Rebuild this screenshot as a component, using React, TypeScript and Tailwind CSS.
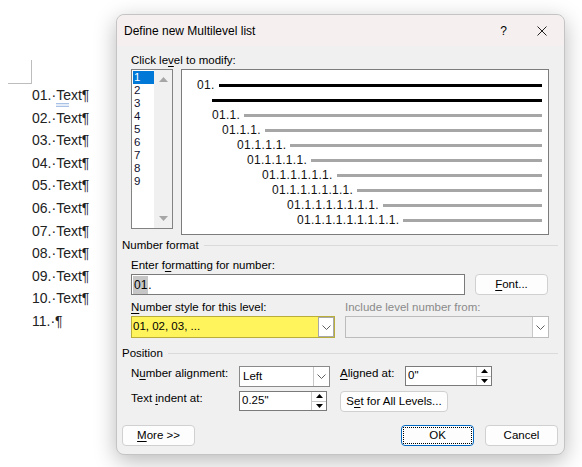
import React from 'react';

/**
 * Word "Define new Multilevel list" dialog over a numbered document list
 */

const ui = "font-['Liberation_Sans',Arial,sans-serif]";

const docItems = ['01.', '02.', '03.', '04.', '05.', '06.', '07.', '08.', '09.', '10.'];

const previewRows = [
  { pad: 'pl-[15px]', label: '01.', dark: true },
  { pad: 'pl-[30px]', label: '', dark: true },
  { pad: 'pl-[30px]', label: '01.1.' },
  { pad: 'pl-[40px]', label: '01.1.1.' },
  { pad: 'pl-[55px]', label: '01.1.1.1.' },
  { pad: 'pl-[65px]', label: '01.1.1.1.1.' },
  { pad: 'pl-[80px]', label: '01.1.1.1.1.1.' },
  { pad: 'pl-[90px]', label: '01.1.1.1.1.1.1.' },
  { pad: 'pl-[105px]', label: '01.1.1.1.1.1.1.1.' },
  { pad: 'pl-[115px]', label: '01.1.1.1.1.1.1.1.1.' },
];

function Chevron() {
  return (
    <svg width="9" height="5" viewBox="0 0 9 5" fill="none">
      <polyline points="0.5,0.5 4.5,4.5 8.5,0.5" stroke="#606060" strokeWidth="1" />
    </svg>
  );
}

function Triangle({ up, color = '#000', w = 7, h = 4 }: { up?: boolean; color?: string; w?: number; h?: number }) {
  return (
    <svg width={w} height={h} viewBox={`0 0 ${w} ${h}`}>
      <polygon points={up ? `0,${h} ${w / 2},0 ${w},${h}` : `0,0 ${w},0 ${w / 2},${h}`} fill={color} />
    </svg>
  );
}

function Key({ children }: { children: React.ReactNode }) {
  return <span className="underline underline-offset-2">{children}</span>;
}

function Button({ children, className = '' }: { children: React.ReactNode; className?: string }) {
  return (
    <div
      className={`flex h-[21px] items-center justify-center rounded-[4px] border border-[#d0d0d0] bg-[#fdfdfd] text-[11.5px] text-black ${className}`}
    >
      {children}
    </div>
  );
}

function Spinner({ value, className = '' }: { value: string; className?: string }) {
  return (
    <div className={`flex h-[20px] border border-[#7a7a7a] bg-white ${className}`}>
      <div className="flex flex-1 items-center pl-[2px] text-[11.5px]">{value}</div>
      <div className="flex w-[15px] flex-col border-l border-[#c8c8c8]">
        <div className="flex flex-1 items-center justify-center border-b border-[#c8c8c8]">
          <Triangle up />
        </div>
        <div className="flex flex-1 items-center justify-center">
          <Triangle />
        </div>
      </div>
    </div>
  );
}

function SectionHeader({ title }: { title: string }) {
  return (
    <div className="flex h-[14px] items-center gap-[5px] text-[11.5px] leading-[14px]">
      <span>{title}</span>
      <div className="h-px flex-1 bg-[#dadada]" />
    </div>
  );
}

export default function App() {
  return (
    <div className="relative h-[467px] w-[582px] overflow-hidden bg-white">
      {/* document behind the dialog */}
      <div className="pl-[8px] pt-[60px]">
        <div className="h-[24px] w-[24px] border-b border-r border-[#bdbdbd]" />
        <ul className="ml-[24px] font-['Liberation_Sans',Arial,sans-serif] text-[14px] leading-[22.6px] text-[#222]">
          {docItems.map((n, i) => (
            <li key={n}>
              {n}·
              <span className="relative">
                Text
                {i === 0 && (
                  <span className="absolute left-0 top-[16px] h-[4px] w-[13px] border-y border-[#a8c1e6] bg-[#e4ecf8]" />
                )}
              </span>
              ¶
            </li>
          ))}
          <li>11.·¶</li>
        </ul>
      </div>

      {/* dialog */}
      <div
        className={`absolute left-[116px] top-[14px] flex h-[441px] w-[449px] flex-col rounded-[8px] border border-[#c4c4c4] bg-[#f0f0f0] text-black shadow-[0_6px_22px_rgba(0,0,0,0.28)] ${ui}`}
      >
        {/* title bar */}
        <div className="flex h-[31px] items-center rounded-t-[8px] bg-[#f6efef] pl-[7px] text-[12px]">
          <span>Define new Multilevel list</span>
          <span className="ml-auto mr-[30px] text-[12px]">?</span>
          <svg className="mr-[17px]" width="10" height="10" viewBox="0 0 10 10">
            <path d="M0.5 0.5 L9.5 9.5 M9.5 0.5 L0.5 9.5" stroke="#222" strokeWidth="1" />
          </svg>
        </div>

        <div className="flex flex-1 flex-col pl-[5px] pr-[6px] pt-[7px]">
          {/* level chooser + preview */}
          <div className="pl-[9px] pr-[9px]">
            <div className="text-[11.5px] leading-[14px]">
              Click le<Key>v</Key>el to modify:
            </div>
            <div className="mt-[2px] flex gap-[8px]">
              <div className="flex h-[160px] w-[42px] border border-[#828282] bg-white">
                <div className="flex w-[22px] flex-col pl-[1px] pt-[1px] text-[11.5px] leading-[13px]">
                  {['1', '2', '3', '4', '5', '6', '7', '8', '9'].map((l, i) => (
                    <div
                      key={l}
                      className={`h-[13px] pl-[1px] ${i === 0 ? 'bg-[#0078d7] text-white' : 'text-[#101030]'}`}
                    >
                      {l}
                    </div>
                  ))}
                </div>
                <div className="flex flex-1 flex-col items-center justify-between bg-[#f0f0f0] py-[7px]">
                  <Triangle up color="#a6a6a6" w={9} h={5} />
                  <Triangle color="#a6a6a6" w={9} h={5} />
                </div>
              </div>

              <div className="flex h-[166px] w-[368px] flex-col border border-[#7c7c7c] bg-white pr-[6px] pt-[8px]">
                {previewRows.map((r, i) => (
                  <div key={i} className={`flex h-[15px] items-center ${r.pad}`}>
                    {r.label && (
                      <span className="mr-[4px] text-[12px] leading-[15px] tracking-[0.3px] text-[#111]">{r.label}</span>
                    )}
                    <div className={`h-[3px] flex-1 ${r.dark ? 'bg-black' : 'bg-[#a6a6a6]'}`} />
                  </div>
                ))}
              </div>
            </div>
          </div>

          {/* number format */}
          <div className="mt-[3px]">
            <SectionHeader title="Number format" />
          </div>
          <div className="pl-[9px] pr-[9px]">
            <div className="mt-[6px] text-[11.5px] leading-[14px]">
              Enter f<Key>o</Key>rmatting for number:
            </div>
            <div className="mt-[2px] flex items-center">
              <div className="flex h-[21px] w-[334px] items-center border border-[#7a7a7a] bg-white pl-[1px] text-[12px]">
                <span className="bg-[#c6c6c6] px-[1px]">01</span>
                <span>.</span>
              </div>
              <Button className="ml-[10px] w-[73px]">
                <Key>F</Key>ont...
              </Button>
            </div>

            <div className="mt-[5px] flex gap-[10px]">
              <div className="w-[204px]">
                <div className="text-[11.5px] leading-[14px]">
                  <Key>N</Key>umber style for this level:
                </div>
                <div className="mt-[2px] flex h-[22px] border border-[#b9ae3a] bg-[#fff45c]">
                  <div className="flex flex-1 items-center pl-[1px] text-[11.5px]">01, 02, 03, ...</div>
                  <div className="flex w-[16px] items-center justify-center border border-[#a8a8a8] bg-white">
                    <Chevron />
                  </div>
                </div>
              </div>
              <div className="w-[204px]">
                <div className="text-[11.5px] leading-[14px] text-[#8a8a8a]">Include level number from:</div>
                <div className="mt-[2px] flex h-[22px] border border-[#bcbcbc] bg-[#f0f0f0]">
                  <div className="flex-1" />
                  <div className="flex w-[16px] items-center justify-center border-l border-[#c8c8c8] bg-white">
                    <Chevron />
                  </div>
                </div>
              </div>
            </div>
          </div>

          {/* position */}
          <div className="mt-[8px]">
            <SectionHeader title="Position" />
          </div>
          <div className="pl-[9px] pr-[9px] text-[11.5px]">
            <div className="mt-[6px] flex items-start">
              <div className="w-[108px] leading-[14px]">
                N<Key>u</Key>mber alignment:
              </div>
              <div className="flex h-[21px] w-[91px] border border-[#8a8a8a] bg-white">
                <div className="flex flex-1 items-center pl-[3px]">Left</div>
                <div className="flex w-[16px] items-center justify-center border-l border-[#c8c8c8]">
                  <Chevron />
                </div>
              </div>
              <div className="ml-[10px] w-[65px] leading-[14px]">
                <Key>A</Key>ligned at:
              </div>
              <Spinner value={'0"'} className="w-[87px]" />
            </div>
            <div className="mt-[4px] flex items-start">
              <div className="w-[108px] leading-[14px]">
                Text <Key>i</Key>ndent at:
              </div>
              <Spinner value={'0.25"'} className="w-[88px]" />
              <Button className="ml-[13px] w-[108px]">
                S<Key>e</Key>t for All Levels...
              </Button>
            </div>
          </div>

          {/* footer buttons */}
          <div className="mt-[13px] flex items-center">
            <Button className="w-[73px]">
              <Key>M</Key>ore &gt;&gt;
            </Button>
            <div className="ml-auto flex gap-[11px]">
              <div className="flex h-[21px] w-[73px] items-center justify-center rounded-[4px] border-[1.5px] border-[#0067c0] bg-[#fdfdfd] p-[1px]">
                <div className="flex h-full w-full items-center justify-center border border-dotted border-black text-[11.5px]">
                  OK
                </div>
              </div>
              <Button className="w-[73px]">Cancel</Button>
            </div>
          </div>
        </div>
      </div>
    </div>
  );
}
